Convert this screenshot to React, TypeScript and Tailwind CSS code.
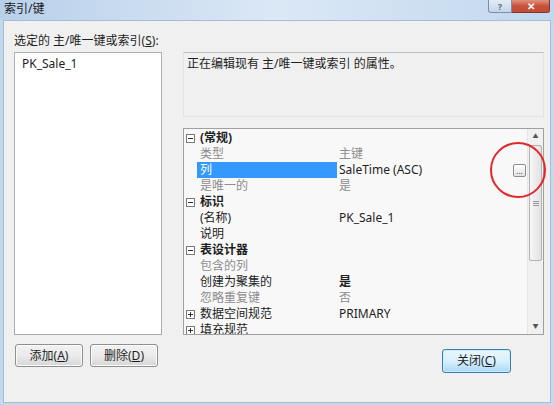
import React from "react";

const font = "font-['Noto_Sans','Noto_Sans_CJK_SC',sans-serif]";

type Row = {
  kind: "cat" | "prop";
  name: string;
  value?: string;
  gray?: boolean;
  bold?: boolean;
  selected?: boolean;
  expander?: "minus" | "plus";
  ellipsis?: boolean;
};

const rows: Row[] = [
  { kind: "cat", name: "(常规)", expander: "minus" },
  { kind: "prop", name: "类型", value: "主键", gray: true },
  { kind: "prop", name: "列", value: "SaleTime (ASC)", selected: true, ellipsis: true },
  { kind: "prop", name: "是唯一的", value: "是", gray: true },
  { kind: "cat", name: "标识", expander: "minus" },
  { kind: "prop", name: "(名称)", value: "PK_Sale_1" },
  { kind: "prop", name: "说明", value: "" },
  { kind: "cat", name: "表设计器", expander: "minus" },
  { kind: "prop", name: "包含的列", value: "", gray: true },
  { kind: "prop", name: "创建为聚集的", value: "是", bold: true },
  { kind: "prop", name: "忽略重复键", value: "否", gray: true },
  { kind: "prop", name: "数据空间规范", value: "PRIMARY", expander: "plus" },
  { kind: "prop", name: "填充规范", value: "", expander: "plus" },
];

const Expander = ({ type }: { type: "minus" | "plus" }) => (
  <div className="relative w-[9px] h-[9px] border border-[#7a7a7a] bg-white">
    <div className="absolute left-[1px] top-[3px] w-[5px] h-px bg-[#333]" />
    {type === "plus" && <div className="absolute left-[3px] top-[1px] w-px h-[5px] bg-[#333]" />}
  </div>
);

const Button = ({ label, hot, focused }: { label: string; hot: string; focused?: boolean }) => {
  const i = label.indexOf(hot);
  return (
    <div
      className={
        "flex items-center justify-center rounded-[3px] border text-[12px] text-[#1e1e1e] bg-gradient-to-b " +
        (focused
          ? "w-[69px] h-[24px] border-[#3c7fb1] from-[#eaf6fd] via-[#d9f0fc] to-[#a7d9f5] shadow-[inset_0_0_0_1px_#c8ecfc]"
          : "w-[68px] h-[23px] border-[#8e8f8f] from-[#f2f2f2] via-[#ebebeb] to-[#d6d6d6] shadow-[inset_0_0_0_1px_#fcfcfc]")
      }
    >
      {label.slice(0, i)}
      <span className="underline">{hot}</span>
      {label.slice(i + 1)}
    </div>
  );
};

export default function App() {
  return (
    <div className={`relative w-[554px] h-[405px] overflow-hidden bg-[#c4d8ee] ${font}`}>
      {/* title bar */}
      <div className="flex h-[20px] items-start bg-gradient-to-r from-[#b9d0ea] via-[#dbe8f6] to-[#c2d7ee]">
        <div className="pl-[4px] pt-[1px] text-[12px] leading-[16px] text-[#1a1a1a]">索引/键</div>
        <div className="ml-auto mr-[4px] flex">
          <div className="flex w-[24px] h-[13px] items-center justify-center rounded-bl-[3px] border border-t-0 border-[#7d8ea6] bg-gradient-to-b from-[#e3ecf6] to-[#c4d5e9] text-[9px] font-bold leading-none text-[#5d6c80]">
            ?
          </div>
          <div className="flex w-[38px] h-[13px] items-center justify-center rounded-br-[3px] border border-l-0 border-t-0 border-[#7a3a33] bg-gradient-to-b from-[#e0917f] via-[#c9503a] to-[#c34a34] text-[10px] font-bold leading-none text-white">
            ✕
          </div>
        </div>
      </div>

      {/* client area */}
      <div className="mx-[3px] h-[383px] border border-[#a9bcd3] bg-[#f0f0f0] pl-[10px] pt-[12px] pr-[6px]">
        <div className="h-[16px] text-[12px] leading-[16px] text-[#1e1e1e]">
          选定的 主/唯一键或索引(<span className="underline">S</span>):
        </div>

        <div className="mt-[3px] flex gap-[21px]">
          {/* left list */}
          <div className="w-[148px] h-[283px] border border-[#abadb3] bg-white pl-[7px] pt-[3px] text-[12px] leading-[16px] text-[#1e1e1e]">
            PK_Sale_1
          </div>

          {/* right column */}
          <div className="w-[361px]">
            <div className="h-[65px] border-t border-[#bfbfbf] border-x border-b border-x-[#e3e3e3] border-b-[#e3e3e3] bg-[#f0f0f0] pl-[3px] pt-[3px] text-[12px] leading-[16px] text-[#1e1e1e]">
              正在编辑现有 主/唯一键或索引 的属性。
            </div>

            <div className="mt-[11px] flex h-[207px] overflow-hidden border border-[#a0a0a0] bg-[#f8f8f8]">
              <div className="flex-1 overflow-hidden pt-px">
                {rows.map((r, idx) => (
                  <div key={idx} className="flex h-[16px] items-center text-[12px] leading-[16px]">
                    <div className="flex w-[13px] justify-start pl-[2px]">{r.expander && <Expander type={r.expander} />}</div>
                    {r.kind === "cat" ? (
                      <div className="pl-[3px] font-bold text-[#1e1e1e]">{r.name}</div>
                    ) : (
                      <>
                        <div
                          className={
                            "w-[140px] h-[16px] pl-[3px] " +
                            (r.selected ? "bg-[#3399ff] text-white" : r.gray ? "text-[#8d8d8d]" : "text-[#1e1e1e]")
                          }
                        >
                          {r.name}
                        </div>
                        <div
                          className={
                            "flex flex-1 items-center pl-[2px] " +
                            (r.gray ? "text-[#8d8d8d]" : "text-[#1e1e1e]") +
                            (r.bold ? " font-semibold" : "")
                          }
                        >
                          {r.value}
                          {r.ellipsis && (
                            <div className="ml-auto mr-[1px] mt-[1px] flex w-[13px] h-[13px] items-end justify-center rounded-[2px] border border-[#8c8c8c] bg-gradient-to-b from-white to-[#e4e4e4] pb-[2px] text-[8px] leading-[6px] text-[#444]">
                              ...
                            </div>
                          )}
                        </div>
                      </>
                    )}
                  </div>
                ))}
              </div>

              {/* scrollbar */}
              <div className="flex w-[16px] flex-col bg-[#f0f0f0] border-l border-[#e6e6e6]">
                <div className="flex h-[15px] items-center justify-center text-[6px] text-[#555]">▲</div>
                <div className="mx-[1px] mt-[1px] flex h-[116px] items-center justify-center rounded-[2px] border border-[#b4b4b4] bg-gradient-to-r from-[#f6f6f6] to-[#e2e2e2]">
                  <div className="flex flex-col gap-[1px]">
                    <div className="w-[6px] h-px bg-[#9a9a9a]" />
                    <div className="w-[6px] h-px bg-[#9a9a9a]" />
                    <div className="w-[6px] h-px bg-[#9a9a9a]" />
                  </div>
                </div>
                <div className="flex-1" />
                <div className="flex h-[15px] items-center justify-center text-[6px] text-[#555]">▼</div>
              </div>
            </div>
          </div>
        </div>

        {/* buttons */}
        <div className="mt-[9px] flex items-start">
          <div className="ml-[1px] flex gap-[7px]">
            <Button label="添加(A)" hot="A" />
            <Button label="删除(D)" hot="D" />
          </div>
          <div className="ml-auto mr-[33px] mt-[5px]">
            <Button label="关闭(C)" hot="C" focused />
          </div>
        </div>
      </div>

      {/* red annotation circle */}
      <div className="absolute left-[490px] top-[142px] w-[56px] h-[56px] rounded-full border-[2px] border-[#e3262b]" />
    </div>
  );
}
